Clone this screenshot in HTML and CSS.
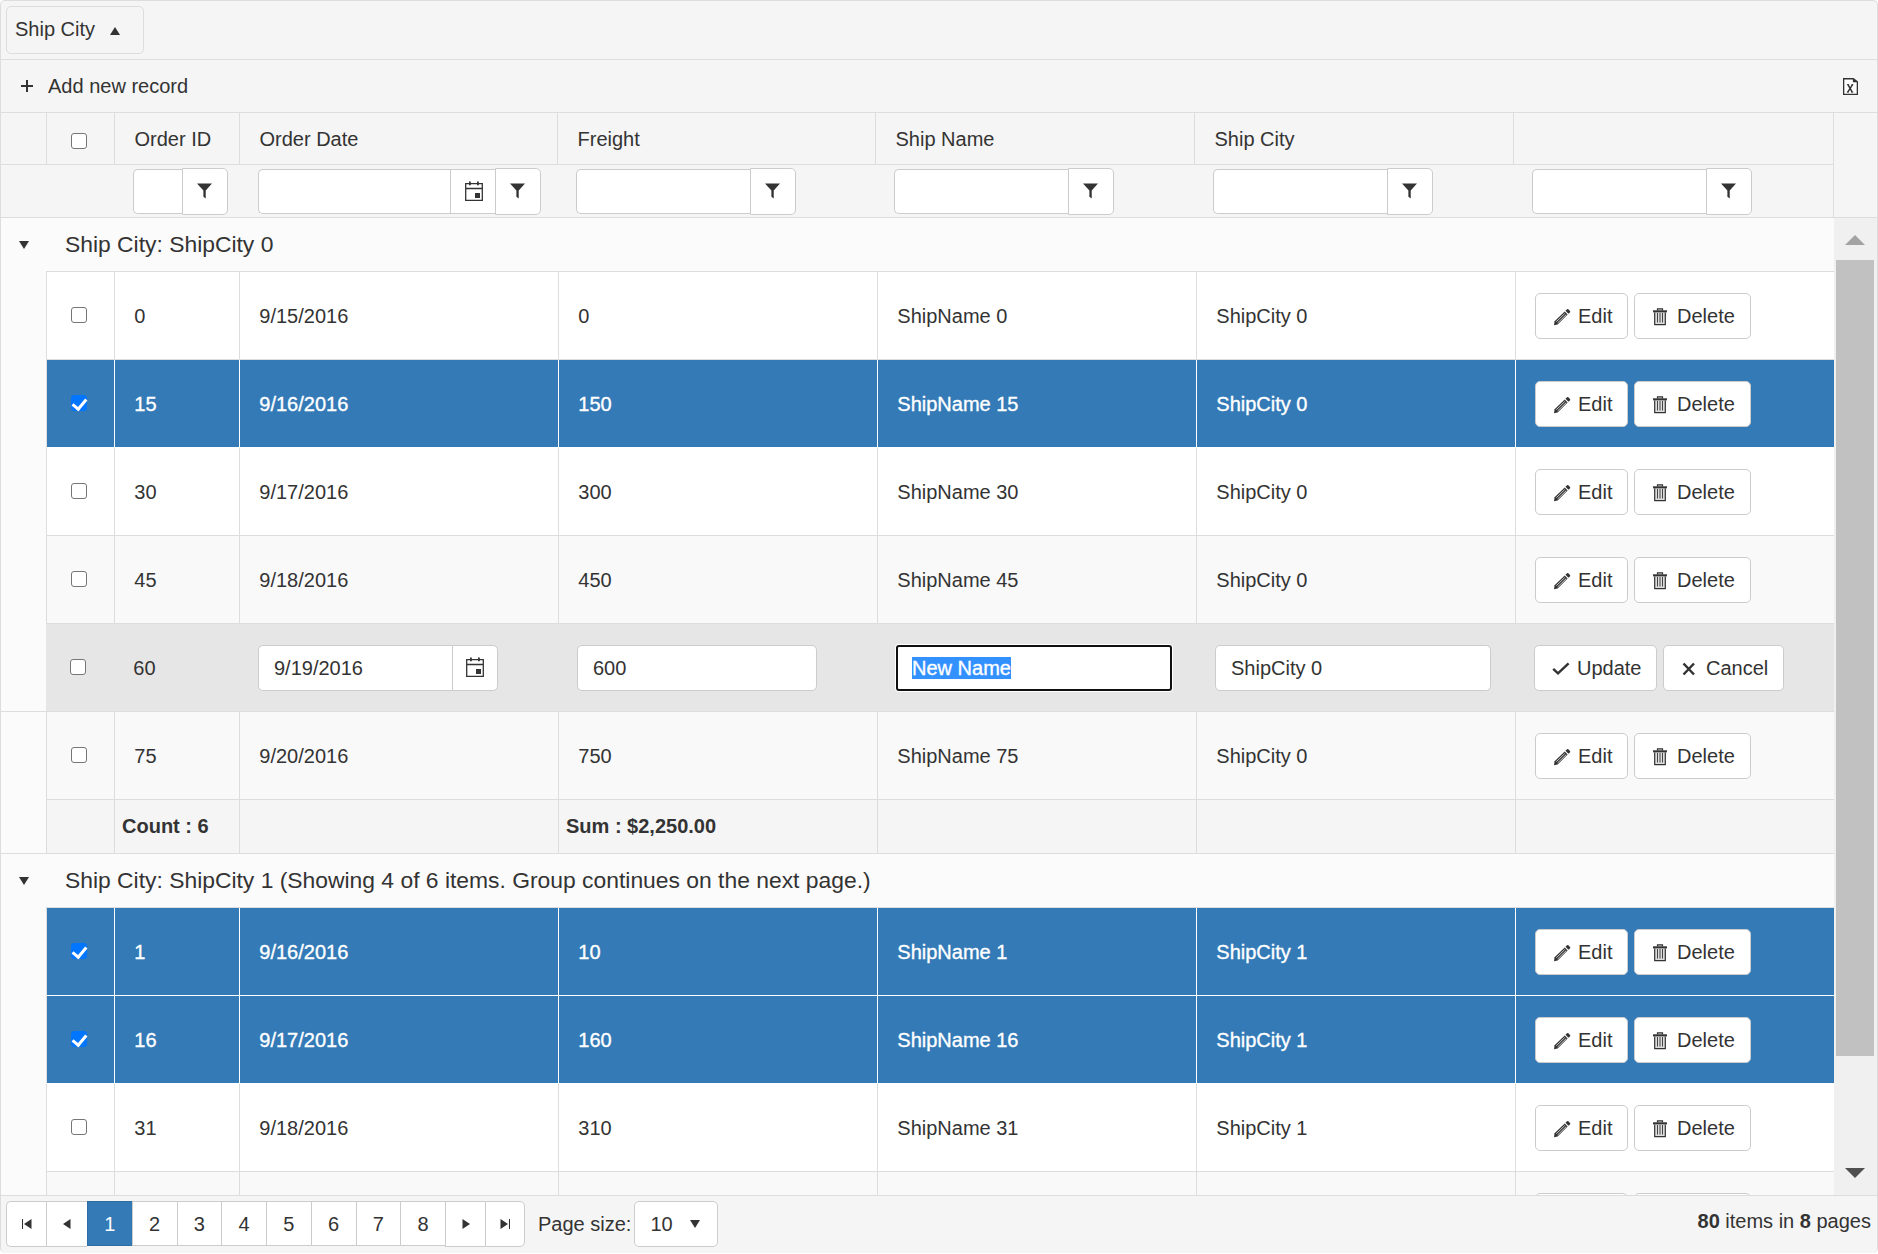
FILE: index.html
```
<!DOCTYPE html>
<html lang="en"><head><meta charset="utf-8"><title>Orders</title><link rel="stylesheet" href="styles.css"></head>
<body>
<svg class="defs" aria-hidden="true">
<symbol id="pencil" viewBox="0 0 18 18"><path d="M1 17.300L1.600 13.200L11.700 3.600L14.600 6.500L4.600 16.500Z" fill="#333"/><path d="M3.300 13.700L11.800 5.500M4.600 15L13.200 6.700" stroke="#ddd" stroke-width=".9"/><path d="M12.500 2.800L14 1.300Q14.700 .7 15.400 1.300L17 2.900Q17.600 3.600 17 4.300L15.400 5.800Z" fill="#333"/></symbol>
<symbol id="trash" viewBox="0 0 14 18"><path d="M4.500 2.500V.8H9.500V2.500M1.700 4.500V16.600H12.300V4.500" fill="#ddd" stroke="#333" stroke-width="1.200"/><path d="M0 2.300H14V4.400H0Z" fill="#333"/><path d="M4.500 5V14.500M7 5V14.500M9.500 5V14.500" stroke="#444" stroke-width="1"/></symbol>
<symbol id="check" viewBox="0 0 18 14"><path d="M1.200 6.800L6 11.400L16.600 1.300" fill="none" stroke="#333" stroke-width="2.400"/></symbol>
<symbol id="cross" viewBox="0 0 14 14"><path d="M1.500 1.500L12 12.500M12 1.500L1.500 12.500" stroke="#333" stroke-width="2.500"/></symbol>
<symbol id="funnel" viewBox="0 0 16 16"><path d="M0 0H16L9.300 7.500V16L6.800 14V7.500Z" fill="#333"/></symbol>
<symbol id="cal" viewBox="0 0 18 20"><path d="M.7 2.700H17.300V19.300H.7ZM.7 7.500H17.300" fill="none" stroke="#333" stroke-width="1.300"/><path d="M4 .5H5.800V4.300H4ZM12 .5H13.800V4.300H12ZM10 12H15V17H10Z" fill="#333"/></symbol>
<symbol id="excel" viewBox="0 0 16 18"><path d="M.7 .7H11L15.300 4V17.300H.7Z" fill="#fff" stroke="#333" stroke-width="1.400"/><path d="M10.500 0V4.500H16Z" fill="#333"/><path d="M5.300 7L9.800 15M10.200 7L5 15" stroke="#333" stroke-width="1.600"/><path d="M4.200 7H6.500M9 7H11M4 15H6.200M8.800 15H11" stroke="#333" stroke-width="1"/></symbol>
</svg>
<main class="grid">
<div class="grouping"><div class="chip">Ship City<i class="tri up"></i></div></div>
<div class="toolbar"><span class="add"><i class="plus"></i>Add new record</span><svg class="excel"><use href="#excel"/></svg></div>
<div class="headwrap">
<div class="head"><span></span><span><i class="box"></i></span><span>Order ID</span><span>Order Date</span><span>Freight</span><span>Ship Name</span><span>Ship City</span><span></span></div>
<div class="filters"><span></span><span></span>
<span><b class="field id"></b><b class="fbtn"><svg><use href="#funnel"/></svg></b></span>
<span><b class="field date"></b><b class="cbtn"><svg><use href="#cal"/></svg></b><b class="fbtn"><svg><use href="#funnel"/></svg></b></span>
<span><b class="field"></b><b class="fbtn"><svg><use href="#funnel"/></svg></b></span>
<span><b class="field"></b><b class="fbtn"><svg><use href="#funnel"/></svg></b></span>
<span><b class="field"></b><b class="fbtn"><svg><use href="#funnel"/></svg></b></span>
<span><b class="field"></b><b class="fbtn"><svg><use href="#funnel"/></svg></b></span></div>
</div>
<div class="viewport">
<div class="rows">
<div class="group"><span><i class="tri down"></i></span><span>Ship City: ShipCity 0</span></div>
<div class="row"><span></span><span><i class="box"></i></span><span>0</span><span>9/15/2016</span><span>0</span><span>ShipName 0</span><span>ShipCity 0</span><span><a class="btn edit"><svg><use href="#pencil"/></svg>Edit</a><a class="btn delete"><svg><use href="#trash"/></svg>Delete</a></span></div>
<div class="row selected"><span></span><span><i class="box on"></i></span><span>15</span><span>9/16/2016</span><span>150</span><span>ShipName 15</span><span>ShipCity 0</span><span><a class="btn edit"><svg><use href="#pencil"/></svg>Edit</a><a class="btn delete"><svg><use href="#trash"/></svg>Delete</a></span></div>
<div class="row"><span></span><span><i class="box"></i></span><span>30</span><span>9/17/2016</span><span>300</span><span>ShipName 30</span><span>ShipCity 0</span><span><a class="btn edit"><svg><use href="#pencil"/></svg>Edit</a><a class="btn delete"><svg><use href="#trash"/></svg>Delete</a></span></div>
<div class="row alt"><span></span><span><i class="box"></i></span><span>45</span><span>9/18/2016</span><span>450</span><span>ShipName 45</span><span>ShipCity 0</span><span><a class="btn edit"><svg><use href="#pencil"/></svg>Edit</a><a class="btn delete"><svg><use href="#trash"/></svg>Delete</a></span></div>
<div class="row editing"><span></span><span><i class="box"></i></span><span>60</span><span><b class="input when">9/19/2016</b><b class="pick"><svg><use href="#cal"/></svg></b></span><span><b class="input amount">600</b></span><span><b class="input name"><mark>New Name</mark></b></span><span><b class="input city">ShipCity 0</b></span><span><a class="btn update"><svg><use href="#check"/></svg>Update</a><a class="btn cancel"><svg><use href="#cross"/></svg>Cancel</a></span></div>
<div class="row alt"><span></span><span><i class="box"></i></span><span>75</span><span>9/20/2016</span><span>750</span><span>ShipName 75</span><span>ShipCity 0</span><span><a class="btn edit"><svg><use href="#pencil"/></svg>Edit</a><a class="btn delete"><svg><use href="#trash"/></svg>Delete</a></span></div>
<div class="row totals"><span></span><span></span><span>Count : 6</span><span></span><span>Sum : $2,250.00</span><span></span><span></span><span></span></div>
<div class="group"><span><i class="tri down"></i></span><span>Ship City: ShipCity 1 (Showing 4 of 6 items. Group continues on the next page.)</span></div>
<div class="row selected"><span></span><span><i class="box on"></i></span><span>1</span><span>9/16/2016</span><span>10</span><span>ShipName 1</span><span>ShipCity 1</span><span><a class="btn edit"><svg><use href="#pencil"/></svg>Edit</a><a class="btn delete"><svg><use href="#trash"/></svg>Delete</a></span></div>
<div class="row selected"><span></span><span><i class="box on"></i></span><span>16</span><span>9/17/2016</span><span>160</span><span>ShipName 16</span><span>ShipCity 1</span><span><a class="btn edit"><svg><use href="#pencil"/></svg>Edit</a><a class="btn delete"><svg><use href="#trash"/></svg>Delete</a></span></div>
<div class="row"><span></span><span><i class="box"></i></span><span>31</span><span>9/18/2016</span><span>310</span><span>ShipName 31</span><span>ShipCity 1</span><span><a class="btn edit"><svg><use href="#pencil"/></svg>Edit</a><a class="btn delete"><svg><use href="#trash"/></svg>Delete</a></span></div>
<div class="row alt"><span></span><span></span><span></span><span></span><span></span><span></span><span></span><span><a class="btn edit"></a><a class="btn delete"></a></span></div>
</div>
<div class="scroll"><i class="arrow top"></i><i class="thumb"></i><i class="arrow bottom"></i></div>
</div>
<footer class="pager">
<nav class="pages"><a class="nav first"><svg viewBox="0 0 10 10"><path d="M.5 0V10" stroke="#333"/><path d="M9.500 0V10L2 5Z"/></svg></a><a class="nav prev"><svg viewBox="0 0 10 10"><path d="M8.500 0V10L1 5Z"/></svg></a><a class="num current">1</a><a class="num">2</a><a class="num">3</a><a class="num">4</a><a class="num">5</a><a class="num">6</a><a class="num">7</a><a class="num">8</a><a class="nav"><svg viewBox="0 0 10 10"><path d="M1.500 0V10L9 5Z"/></svg></a><a class="nav last"><svg viewBox="0 0 10 10"><path d="M9.500 0V10" stroke="#333"/><path d="M.5 0V10L8 5Z"/></svg></a></nav>
<span class="label">Page size:</span><span class="combo">10<i class="tri down"></i></span>
<span class="info"><strong>80</strong> items in <strong>8</strong> pages</span>
</footer>
</main>
</body></html>
```
FILE: styles.css
```
* { box-sizing: border-box; }
html, body { margin: 0; height: 100%; overflow: hidden; background: #fff; }
body { font: 20px/24px "Liberation Sans", Arial, sans-serif; color: #333; }
b { font-weight: normal; }
i { font-style: normal; }
.defs { position: absolute; width: 0; height: 0; }
.grid { width: 1878px; height: 1253px; border: 1px solid #ddd; border-bottom: 0; border-radius: 5px; background: #f5f5f5; display: flex; flex-direction: column; overflow: hidden; }
.grouping { height: 59px; flex: none; padding: 5px; border-bottom: 1px solid #ddd; }
.chip { width: 138px; height: 48px; border: 1px solid #ddd; border-radius: 5px; padding: 0 8px 2px; display: flex; align-items: center; }
.tri { width: 0; height: 0; border: 5px solid transparent; }
.tri.up { border-top: 0; border-bottom: 8px solid #333; margin: 4px 0 0 15px; }
.tri.down { border-bottom: 0; border-top: 8px solid #333; }
.toolbar { height: 53px; flex: none; border-bottom: 1px solid #ddd; display: flex; align-items: center; justify-content: space-between; padding: 0 18px 0 20px; }
.add { display: flex; align-items: center; }
.plus { width: 12px; height: 12px; margin-right: 15px; background: linear-gradient(#333, #333) center/12px 2px no-repeat, linear-gradient(#333, #333) center/2px 12px no-repeat; }
.excel { width: 15px; height: 17px; margin-right: 1px; }
.headwrap { flex: none; height: 105px; border-bottom: 1px solid #ddd; }
.head, .filters { width: 1833px; display: grid; grid-template-columns: 45px 68px 125px 318px 318px 319px 319px 321px; border-right: 1px solid #ddd; }
.head { height: 52px; }
.head > span { display: flex; align-items: center; padding: 0 0 0 19.500px; border-left: 1px solid #ddd; border-bottom: 1px solid #ddd; }
.head > span:first-child { border-left: 0; }
.head > span:nth-child(2) { padding: 5px 0 0 24px; }
.filters { height: 52px; }
.filters > span { display: flex; align-items: center; padding-left: 19px; }
.field { width: 174px; height: 45px; background: #fff; border: 1px solid #ccc; border-right: 0; border-radius: 5px 0 0 5px; }
.field.id { width: 49px; }
.field.date { width: 192px; }
.cbtn, .fbtn { height: 47px; width: 46px; background: #fff; border: 1px solid #ccc; display: flex; align-items: center; justify-content: center; }
.fbtn { border-radius: 0 5px 5px 0; }
.cbtn { width: 45px; height: 45px; border-right: 0; padding-left: 1px; }
.fbtn svg { width: 15px; height: 16px; margin: 0 1px 1px 0; }
.cbtn svg, .pick svg { width: 18px; height: 20px; }
.pick svg { margin-bottom: 1px; }
.viewport { height: 977px; flex: none; display: flex; overflow: hidden; }
.rows { width: 1833px; background: #fbfbfb; }
.group { height: 54px; display: grid; grid-template-columns: 45px 1fr; font-size: 22.860px; }
.group > span { display: flex; align-items: center; }
.group > span:first-child { padding-left: 18px; }
.group > span:last-child { padding: 0 0 2px 19px; border-bottom: 1px solid #ddd; }
.row { height: 88px; display: grid; grid-template-columns: 45px 68px 125px 319px 319px 319px 319px 319px; }
.row > span { display: flex; align-items: center; padding: 1px 0 0 19.300px; border-left: 1px solid #ddd; border-bottom: 1px solid #ddd; background: #fff; white-space: nowrap; }
.row > span:first-child { border: 0; background: #fbfbfb; }
.row > span:nth-child(2) { padding: 0 0 1px 24px; }
.row > span:last-child { padding: 0 0 0 19px; }
.alt > span:not(:first-child) { background: #f9f9f9; }
.selected > span:not(:first-child) { background: #337ab7; color: #fff; border-color: #fff; -webkit-text-stroke: .35px #fff; }
.selected .btn { -webkit-text-stroke: 0; }
.selected > span:nth-child(2) { border-left-color: #ddd; }
.editing > span:not(:first-child) { background: #e6e6e6; border-left: 0; }
.editing > span:not(:nth-child(-n+3)) { padding: 0 0 0 19px; }
.editing > span:first-child { border-bottom: 1px solid #ddd; }
.totals { height: 54px; font-weight: bold; }
.totals > span:not(:first-child) { background: #f5f5f5; padding: 0 0 2px 7px; }
.totals > span:first-child { border-bottom: 1px solid #ddd; }
.box { width: 16px; height: 16px; border: 1px solid #767676; border-radius: 3px; background: #fff; }
.box.on { border-color: #0075ff; background: #0075ff; display: flex; justify-content: center; }
.box.on::after { content: ""; width: 6px; height: 11px; border: solid #fff; border-width: 0 3px 3px 0; transform: rotate(40deg); }
.btn { height: 46px; border: 1px solid #ccc; border-radius: 5px; background: #fff; color: #333; display: flex; align-items: center; padding: 0 0 0 17px; }
.edit { width: 93px; margin-right: 6px; }
.delete { width: 117px; }
.update { width: 123px; margin-right: 6px; }
.cancel { width: 121px; }
.edit svg { width: 18px; height: 18px; margin: 3px 7px 0 0; }
.delete svg { width: 14px; height: 18px; margin: 2px 9px 0 1px; }
.update svg { width: 18px; height: 14px; margin: 3px 7px 0 0; }
.cancel svg { width: 14px; height: 14px; margin: 3px 9px 0 1px; }
.delete svg, .cancel svg { margin-right: 10px; }
.input { height: 46px; border: 1px solid #ccc; border-radius: 5px; background: #fff; padding: 0 0 0 15px; display: flex; align-items: center; }
.when { width: 194px; border-right: 0; border-radius: 5px 0 0 5px; }
.pick { width: 46px; height: 46px; background: #fff; border: 1px solid #ccc; border-radius: 0 5px 5px 0; display: flex; align-items: center; justify-content: center; }
.amount { width: 240px; }
.name { width: 276px; border: 2px solid #101010; border-radius: 3px; box-shadow: 0 0 0 1px #fff; padding-left: 14px; }
.city { width: 276px; }
mark { background: #3390ff; color: #fff; line-height: 22px; -webkit-text-stroke: .35px #fff; }
.scroll { width: 43px; background: #f0f0f0; display: flex; flex-direction: column; align-items: center; padding-right: 1px; }
.arrow { width: 0; height: 0; border: 10px solid transparent; flex: none; }
.arrow.top { border-top: 0; border-bottom-color: #a3a3a3; margin: 17px 0 15px; }
.arrow.bottom { border-bottom: 0; border-top-color: #505050; margin-top: 112px; }
.thumb { width: 38px; height: 796px; background: #c1c1c1; flex: none; }
.pager { flex: 1; border-top: 1px solid #ddd; display: flex; align-items: flex-start; padding: 5px 6px 0 5px; }
.pages { display: flex; }
.nav, .num { height: 45px; border: 1px solid #ccc; border-right: 0; background: #fff; display: flex; align-items: center; justify-content: center; width: 44.750px; }
.nav { width: 40px; height: 46px; }
.nav.prev { width: 41px; }
.nav svg { width: 10px; height: 10px; fill: #333; }
.first { border-radius: 5px 0 0 5px; }
.last { border-right: 1px solid #ccc; border-radius: 0 5px 5px 0; }
.current { background: #337ab7; border-color: #2e6da4; color: #fff; }
.label { margin: 10.500px 0 0 13px; }
.combo { width: 84px; height: 46px; margin-left: 3px; border: 1px solid #ccc; border-radius: 5px; background: #fff; display: flex; align-items: center; padding-left: 15px; }
.combo .tri { margin-left: 17px; }
.info { margin: 8px 0 0 auto; }
```
